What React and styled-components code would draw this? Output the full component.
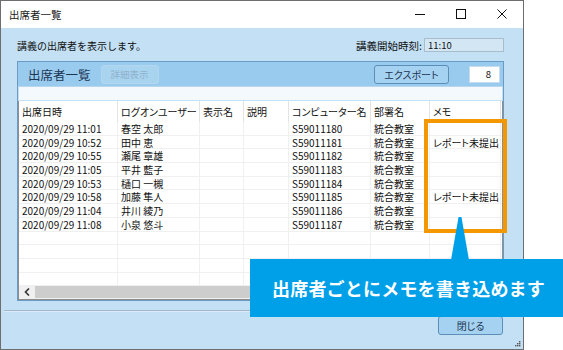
import React from 'react';
import styled, { createGlobalStyle } from 'styled-components';

const Global = createGlobalStyle`
  html, body { margin: 0; padding: 0; background: #fff; }
  body { font-family: "Noto Sans CJK JP", "Noto Sans", sans-serif; }
  * { box-sizing: border-box; }
`;

const Stage = styled.div`
  position: relative;
  width: 563px;
  height: 350px;
  overflow: hidden;
  background: #fff;
`;

const Window = styled.div`
  position: relative;
  width: 524px;
  height: 350px;
  border: 1px solid #6e6e6e;
  background: #c3e0f4;
  display: flex;
  flex-direction: column;
`;

const TitleBar = styled.div`
  height: 27px;
  flex: none;
  background: #fff;
  display: flex;
  align-items: center;
  padding-left: 8px;
  font-size: 10.5px;
  color: #1a1a1a;
`;

const TitleText = styled.span`
  flex: 1;
`;

const Ctrl = styled.div`
  width: 41px;
  height: 27px;
  display: flex;
  align-items: center;
  justify-content: center;
`;

const Body = styled.div`
  flex: 1;
  display: flex;
  flex-direction: column;
  padding: 10px 19px 0 16px;
`;

const InfoRow = styled.div`
  height: 14px;
  display: flex;
  align-items: center;
  font-size: 10px;
  color: #111;
`;

const InfoText = styled.span`
  flex: 1;
`;

const TimeLabel = styled.span`
  margin-right: 2px;
  font-size: 10.5px;
`;

const TimeBox = styled.div`
  width: 80px;
  height: 14px;
  border: 1px solid #a9bccb;
  background: #d3e6f4;
  font-size: 9.5px;
  line-height: 12px;
  padding-left: 3px;
  color: #111;
`;

const Panel = styled.div`
  margin-top: 9px;
  height: 240px;
  border: 1px solid #6b9bc4;
  background: #c3e0f4;
  display: flex;
  flex-direction: column;
`;

const PanelHeader = styled.div`
  height: 24px;
  flex: none;
  background: #98cbee;
  display: flex;
  align-items: center;
  padding: 0 3px 0 10px;
`;

const PanelTitle = styled.span`
  font-size: 12.5px;
  color: #1c3553;
  margin-right: 10px;
`;

const Btn = styled.div`
  height: 19px;
  width: ${p => p.$w}px;
  border-radius: 3px;
  border: 1px solid ${p => (p.$disabled ? '#b4d7ef' : '#5d8db9')};
  background: ${p => (p.$disabled ? '#a9d4f0' : '#a6d2f1')};
  color: ${p => (p.$disabled ? '#8fb2cc' : '#1c3553')};
  font-size: ${p => p.$fs || 9.5}px;
  font-feature-settings: "palt";
  display: flex;
  align-items: center;
  justify-content: center;
`;

const Spacer = styled.div`
  flex: 1;
`;

const CountBox = styled.div`
  width: 31px;
  height: 17px;
  margin-left: 20px;
  background: #fff;
  border: 1px solid #c8dced;
  font-size: 9.5px;
  color: #111;
  text-align: right;
  padding-right: 8px;
  line-height: 15px;
`;

const FilterStrip = styled.div`
  height: 14px;
  margin: 0 1px;
  background: #f4f9fd;
  border-top: 1px solid #b9d6ec;
`;

const Table = styled.div`
  margin-top: 1px;
  flex: 1;
  border: 1px solid #8e8e8e;
  border-top: none;
  background: #fff;
  display: flex;
  flex-direction: column;
  overflow: hidden;
`;

const COLS = '99px 82px 44px 45px 82px 59px 71px';

const HeadRow = styled.div`
  display: grid;
  grid-template-columns: ${COLS};
  height: 21px;
  flex: none;
`;

const HeadCell = styled.div`
  border-right: 1px solid #e3e3e3;
  padding: 0 0 0 3px;
  font-size: 10px;
  font-feature-settings: "palt";
  line-height: 21px;
  color: #111;
  white-space: nowrap;
`;

const Rows = styled.div`
  flex: 1;
  overflow: hidden;
`;

const Row = styled.div`
  display: grid;
  grid-template-columns: ${COLS};
  height: 13.7px;
  border-bottom: 1px solid #f0f0f0;
`;

const Cell = styled.div`
  border-right: 1px solid #f0f0f0;
  padding-left: 3px;
  font-size: 10px;
  font-feature-settings: "palt";
  line-height: 13px;
  color: #111;
  white-space: nowrap;
`;

const HScroll = styled.div`
  height: 14px;
  flex: none;
  background: #f0f0f0;
  display: flex;
  align-items: stretch;
`;

const ScrollArrow = styled.div`
  width: 16px;
  display: flex;
  align-items: center;
  justify-content: center;
`;

const Thumb = styled.div`
  flex: 1;
  margin: 1px 0;
  background: #cdcdcd;
`;

const Separator = styled.div`
  margin: 9px -15px 0 -13px;
  height: 2px;
  border-top: 1px solid #9fb8cc;
  border-bottom: 1px solid #dcebf7;
`;

const Footer = styled.div`
  display: flex;
  justify-content: flex-end;
  margin-top: 4px;
  padding-right: 1px;
`;

const Grip = styled.svg`
  position: absolute;
  right: 2px;
  bottom: 2px;
`;

const Highlight = styled.div`
  position: absolute;
  left: 424px;
  top: 119px;
  width: 83px;
  height: 114px;
  border: 4px solid #f39800;
`;

const Pointer = styled.div`
  position: absolute;
  left: 451px;
  top: 217px;
  width: 18px;
  height: 43px;
  background: #00a0e9;
  clip-path: polygon(42% 0, 58% 0, 100% 100%, 0 100%);
`;

const Callout = styled.div`
  position: absolute;
  left: 250px;
  top: 259px;
  width: 313px;
  height: 58px;
  background: #00a0e9;
  color: #fff;
  font-size: 18px;
  font-weight: 700;
  display: flex;
  align-items: center;
  padding-left: 22px;
  letter-spacing: 0.2px;
`;

const headers = ['出席日時', 'ログオンユーザー', '表示名', '説明', 'コンピューター名', '部署名', 'メモ'];

const data = [
  ['2020/09/29 11:01', '春空 太郎', '', '', 'S59011180', '統合教室', ''],
  ['2020/09/29 10:52', '田中 恵', '', '', 'S59011181', '統合教室', 'レポート未提出'],
  ['2020/09/29 10:55', '瀬尾 章雄', '', '', 'S59011182', '統合教室', ''],
  ['2020/09/29 11:05', '平井 藍子', '', '', 'S59011183', '統合教室', ''],
  ['2020/09/29 10:53', '樋口 一槻', '', '', 'S59011184', '統合教室', ''],
  ['2020/09/29 10:58', '加藤 隼人', '', '', 'S59011185', '統合教室', 'レポート未提出'],
  ['2020/09/29 11:04', '井川 綾乃', '', '', 'S59011186', '統合教室', ''],
  ['2020/09/29 11:08', '小泉 悠斗', '', '', 'S59011187', '統合教室', ''],
];

const empty = Array.from({ length: 5 }, () => ['', '', '', '', '', '', '']);

export default function App() {
  const rows = [...data, ...empty];
  return (
    <Stage>
      <Global />
      <Window>
        <TitleBar>
          <TitleText>出席者一覧</TitleText>
          <Ctrl>
            <svg width="11" height="11" viewBox="0 0 11 11"><line x1="0" y1="5.5" x2="10" y2="5.5" stroke="#111" strokeWidth="1" /></svg>
          </Ctrl>
          <Ctrl>
            <svg width="11" height="11" viewBox="0 0 11 11"><rect x="0.5" y="0.5" width="9" height="9" fill="none" stroke="#111" strokeWidth="1" /></svg>
          </Ctrl>
          <Ctrl>
            <svg width="11" height="11" viewBox="0 0 11 11"><path d="M0.5 0.5 L9.5 9.5 M9.5 0.5 L0.5 9.5" stroke="#111" strokeWidth="1" /></svg>
          </Ctrl>
        </TitleBar>
        <Body>
          <InfoRow>
            <InfoText>講義の出席者を表示します。</InfoText>
            <TimeLabel>講義開始時刻:</TimeLabel>
            <TimeBox>11:10</TimeBox>
          </InfoRow>
          <Panel>
            <PanelHeader>
              <PanelTitle>出席者一覧</PanelTitle>
              <Btn $w={58} $disabled>詳細表示</Btn>
              <Spacer />
              <Btn $w={75} $fs={10}>エクスポート</Btn>
              <CountBox>8</CountBox>
            </PanelHeader>
            <FilterStrip />
            <Table>
              <HeadRow>
                {headers.map(h => <HeadCell key={h}>{h}</HeadCell>)}
              </HeadRow>
              <Rows>
                {rows.map((r, i) => (
                  <Row key={i}>
                    {r.map((c, j) => <Cell key={j}>{c}</Cell>)}
                  </Row>
                ))}
              </Rows>
              <HScroll>
                <ScrollArrow>
                  <svg width="7" height="8" viewBox="0 0 7 8"><polyline points="5,0.5 1.5,4 5,7.5" fill="none" stroke="#333" strokeWidth="1.6" /></svg>
                </ScrollArrow>
                <Thumb />
                <ScrollArrow>
                  <svg width="7" height="8" viewBox="0 0 7 8"><polyline points="2,0.5 5.5,4 2,7.5" fill="none" stroke="#333" strokeWidth="1.6" /></svg>
                </ScrollArrow>
              </HScroll>
            </Table>
          </Panel>
          <Separator />
          <Footer>
            <Btn $w={65} $fs={10}>閉じる</Btn>
          </Footer>
        </Body>
        <Grip width="6" height="6" viewBox="0 0 6 6">
          <rect x="4" y="0" width="1.4" height="1.4" fill="#555" />
          <rect x="2" y="2" width="1.4" height="1.4" fill="#555" />
          <rect x="4" y="2" width="1.4" height="1.4" fill="#555" />
          <rect x="0" y="4" width="1.4" height="1.4" fill="#555" />
          <rect x="2" y="4" width="1.4" height="1.4" fill="#555" />
          <rect x="4" y="4" width="1.4" height="1.4" fill="#555" />
        </Grip>
      </Window>
      <Highlight />
      <Pointer />
      <Callout>出席者ごとにメモを書き込めます</Callout>
    </Stage>
  );
}
